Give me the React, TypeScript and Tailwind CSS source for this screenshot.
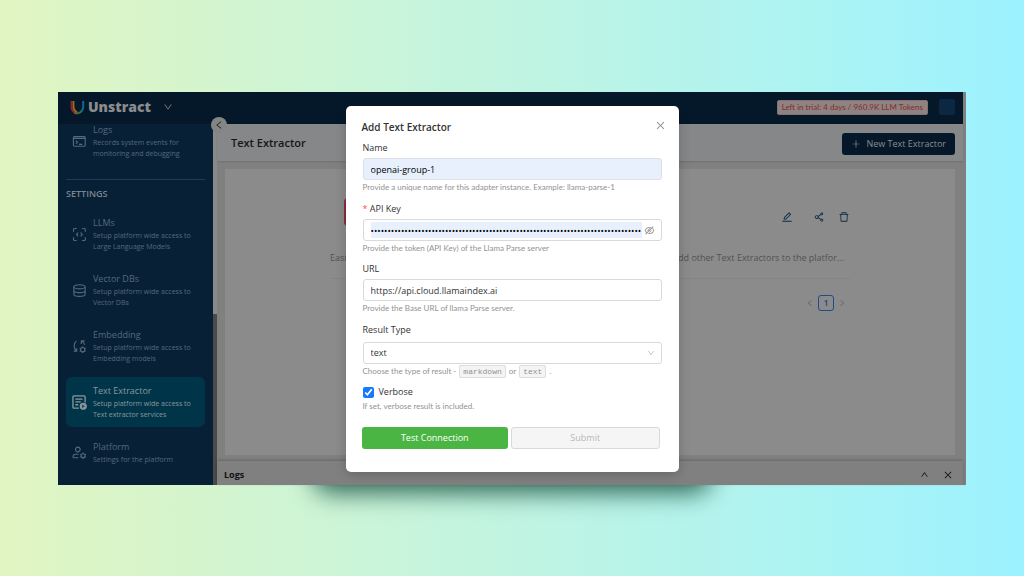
import React, { useState } from "react";
import {
  AiOutlineClose,
  AiOutlineDelete,
  AiOutlineDown,
  AiOutlineEdit,
  AiOutlineEyeInvisible,
  AiOutlineLeft,
  AiOutlinePlus,
  AiOutlineRight,
  AiOutlineShareAlt,
  AiOutlineUp,
} from "react-icons/ai";

interface menuItem {
  id: string;
  title: string;
  description: string;
  icon: React.ReactNode;
}

function Svg(props: { children: React.ReactNode }) {
  return (
    <svg
      viewBox="0 0 16 16"
      className="h-[15px] w-[15px] shrink-0"
      fill="none"
      stroke="currentColor"
      strokeWidth="1.2"
    >
      {props.children}
    </svg>
  );
}

const logsItem: menuItem = {
  id: "logs",
  title: "Logs",
  description: "Records system events for monitoring and debugging",
  icon: (
    <Svg>
      <rect x="1.5" y="2.8" width="12.6" height="10.2" rx="1" />
      <path d="M1.5 4.6h12.6M4 7l2 1.8-2 1.8M7.5 11h3.4" />
    </Svg>
  ),
};

const settingsItems: menuItem[] = [
  {
    id: "llms",
    title: "LLMs",
    description: "Setup platform wide access to Large Language Models",
    icon: (
      <Svg>
        <path d="M1.6 5V2.6a1 1 0 0 1 1-1H5M10.8 1.6h2.4a1 1 0 0 1 1 1V5M14.2 11v2.4a1 1 0 0 1-1 1h-2.4M5 14.4H2.6a1 1 0 0 1-1-1V11" />
        <path d="M6.6 6 4.8 8l1.8 2M9.2 6 11 8l-1.8 2" />
      </Svg>
    ),
  },
  {
    id: "vector",
    title: "Vector DBs",
    description: "Setup platform wide access to Vector DBs",
    icon: (
      <Svg>
        <ellipse cx="8" cy="4" rx="6" ry="2.2" />
        <path d="M2 4v8c0 1.2 2.7 2.2 6 2.2s6-1 6-2.2V4M2 8c0 1.2 2.7 2.2 6 2.2s6-1 6-2.2" />
      </Svg>
    ),
  },
  {
    id: "embedding",
    title: "Embedding",
    description: "Setup platform wide access to Embedding models",
    icon: (
      <Svg>
        <path d="M4.8 2C1.6 4.6 1.4 9.6 4.6 12.8M1.8 12.9H5V9.8M9.6 2h3.8M9.9 2v3.2M10 2.2c2 .8 3.2 2.2 3.6 4" />
        <circle cx="11.4" cy="11.4" r="2.3" />
        <path d="M11.4 7.8v1.3M11.4 13.7V15M8.2 9.6l1.2.7M13.4 12.5l1.2.7M8.2 13.2l1.2-.7M13.4 10.3l1.2-.7" />
      </Svg>
    ),
  },
  {
    id: "extractor",
    title: "Text Extractor",
    description: "Setup platform wide access to Text extractor services",
    icon: (
      <Svg>
        <path
          d="M7.4 14H2a1 1 0 0 1-1-1V2a1 1 0 0 1 1-1h11a1 1 0 0 1 1 1v6M3.6 4.4h7.6M3.6 7.4h5.8M3.6 10.4h3"
          strokeWidth="1.4"
        />
        <circle cx="12" cy="12" r="3.2" fill="currentColor" />
        <path d="M11.2 10.6 13.2 12l-2 1.4z" fill="#003549" stroke="#003549" strokeWidth=".5" />
      </Svg>
    ),
  },
  {
    id: "platform",
    title: "Platform",
    description: "Settings for the platform",
    icon: (
      <Svg>
        <circle cx="6.2" cy="4.8" r="2.5" />
        <path d="M1.2 13.6v-1c0-1.6 1-2.8 2.6-2.8h3.4M1.2 13.6h5.6" />
        <circle cx="11.8" cy="11.4" r="2.1" />
        <path d="M11.8 8v1.3M11.8 13.5v1.3M8.9 9.7l1.1.6M13.6 12.5l1.1.6M8.9 13.1l1.1-.6M13.6 10.3l1.1-.6" />
      </Svg>
    ),
  },
];

function MenuLink(props: { item: menuItem; active?: boolean }) {
  return (
    <a
      href={`#${props.item.id}`}
      className={
        props.active
          ? "flex items-center gap-[6px] rounded-md bg-[#003549] py-[7px] pr-2 pl-[6px] text-[#8a979d]"
          : "flex items-center gap-[6px] rounded-md py-[7px] pr-2 pl-[6px] text-[#56687a]"
      }
    >
      {props.item.icon}
      <span className="flex flex-col gap-px">
        <span className="text-[9px] leading-[13px]">{props.item.title}</span>
        <span className="text-[7px] leading-[11px]">{props.item.description}</span>
      </span>
    </a>
  );
}

function Logo() {
  return (
    <svg viewBox="0 0 15 15" className="h-[15px] w-[15px]" fill="none" strokeWidth="2">
      <path d="M1.5 1v5.4c0 2.4 1 4.6 3 5.8" stroke="#8e2431" />
      <path d="M3.5 1v5c0 2.6 1 5 3.6 6.2" stroke="#94711c" strokeWidth="1.8" />
      <path d="M4.2 12.3c1.2.8 2.4 1.1 3.6 1" stroke="#98551c" />
      <path d="M7.6 13.3c2-.2 3.8-1.4 4.7-3.4" stroke="#1d7a52" />
      <path d="M13.2 1v5.4c0 1.6-.3 2.8-1 3.9" stroke="#17629a" />
    </svg>
  );
}

function Header() {
  return (
    <header className="flex h-8 items-center bg-[#05182a] pr-2 pb-[2px] pl-3">
      <Logo />
      <span className="ml-[3px] text-[14px] leading-4 font-extrabold text-[#8c8c8c]">
        Unstract
      </span>
      <button type="button" aria-label="Switch organization" className="ml-3 text-[#8c8c8c]">
        <AiOutlineDown size={10} />
      </button>
      <span className="ml-auto rounded-xs border border-[#8c706e] bg-[#8c8382] px-1 font-['Lato',sans-serif] text-[8px] leading-[13px] whitespace-nowrap text-[#8c2a2c]">
        Left in trial: 4 days / 960.9K LLM Tokens
      </span>
      <button
        type="button"
        aria-label="Account"
        className="ml-[11px] h-4 w-4 rounded-xs bg-[#0c2742]"
      />
    </header>
  );
}

function Sidebar() {
  return (
    <aside className="relative flex w-[155px] shrink-0">
      <nav className="flex w-full flex-col bg-[#082036] px-2 pb-3">
        {/* the list is scrolled, so its first entry sits right under the header */}
        <div className="-mt-[8px]">
          <MenuLink item={logsItem} />
        </div>
        <hr className="mt-[13px] mb-2 border-[#233a50]" />
        <h2 className="mb-[9px] text-[9px] leading-3 font-semibold text-[#7b858e]">
          SETTINGS
        </h2>
        <div className="flex flex-col gap-[6px]">
          {settingsItems.map((item) => (
            <MenuLink key={item.id} item={item} active={item.id === "extractor"} />
          ))}
        </div>
      </nav>
      <button
        type="button"
        aria-label="Collapse menu"
        className="absolute -top-[7px] -right-[14px] z-10 flex h-4 w-4 items-center justify-center rounded-full bg-[#858585] text-[#222]"
      >
        <AiOutlineLeft size={10} />
      </button>
    </aside>
  );
}

function Adapters() {
  return (
    <div className="mx-2 mt-2 mb-[6px] flex-1 bg-[#8b8b8b] px-[105px] pt-[29px]">
      <div className="border-b border-[#848484] pb-[13px]">
        <div className="flex h-[28px] items-center pl-[14px] text-[#0d2a43]">
          <div className="h-[28px] w-[28px] rounded-sm bg-[#8c2c44]" />
          <button type="button" aria-label="Edit" className="mt-[10px] mr-5 ml-auto">
            <AiOutlineEdit size={12} />
          </button>
          <button type="button" aria-label="Share" className="mt-[10px] mr-[13px]">
            <AiOutlineShareAlt size={12} />
          </button>
          <button type="button" aria-label="Delete" className="mt-[10px]">
            <AiOutlineDelete size={12} />
          </button>
        </div>
        <p className="mt-[25px] flex justify-between pr-[6px] text-[9px] leading-[14px] text-[#525252]">
          <span>Easily</span>
          <span>add other Text Extractors to the platfor...</span>
        </p>
      </div>
      <div className="mt-4 flex items-center justify-end gap-1 pr-1 text-[#606060]">
        <button type="button" aria-label="Previous page">
          <AiOutlineLeft size={8} />
        </button>
        <button
          type="button"
          className="h-4 w-4 rounded-[3px] border border-[#1f4c8c] text-[9px] leading-[14px] font-semibold text-[#1b478c]"
        >
          1
        </button>
        <button type="button" aria-label="Next page">
          <AiOutlineRight size={8} />
        </button>
      </div>
    </div>
  );
}

function Help(props: { children: React.ReactNode }) {
  return (
    <p className="mt-[2px] font-['Lato',sans-serif] text-[8px] leading-[11px] text-[#929292]">
      {props.children}
    </p>
  );
}

function Code(props: { children: React.ReactNode }) {
  return (
    <code className="mx-px rounded-xs border border-[#ddd] bg-[#f4f4f4] px-[3px] py-px font-['Liberation_Mono',monospace] text-[8px]">
      {props.children}
    </code>
  );
}

function AddExtractor() {
  const [name, setName] = useState("openai-group-1");
  const [apiKey, setApiKey] = useState("x".repeat(80));
  const [url, setUrl] = useState("https://api.cloud.llamaindex.ai");
  const [resultType, setResultType] = useState("text");
  const [verbose, setVerbose] = useState(true);

  return (
    <div
      role="dialog"
      aria-labelledby="dialog-title"
      className="w-[333px] rounded-[5px] bg-white px-4 pt-[14px] pb-[23px] text-[#333] shadow-[0_3px_12px_rgba(0,0,0,0.2)]"
    >
      <div className="flex items-start justify-between">
        <h2 id="dialog-title" className="text-[10px] leading-[14px] font-semibold">
          Add Text Extractor
        </h2>
        <button type="button" aria-label="Close" className="-mr-[3px] text-[#888]">
          <AiOutlineClose size={11} />
        </button>
      </div>

      <form onSubmit={(e) => e.preventDefault()}>
        <div className="mt-[7px] px-px">
          <label htmlFor="name" className="block text-[9px] leading-[14px]">
            Name
          </label>
          <input
            id="name"
            type="text"
            value={name}
            onChange={(e) => setName(e.target.value)}
            className="mt-[3px] block h-[22px] w-full rounded-[3px] border border-[#dcdfe6] bg-[#e8f0fe] px-[7px] text-[9px] font-medium text-black"
          />
          <Help>
            Provide a unique name for this adapter instance. Example: llama-parse-1
          </Help>
        </div>

        <div className="mt-[9px] px-px">
          <label htmlFor="key" className="block text-[9px] leading-[14px]">
            <span className="text-[#ff4d4f]">*</span> API Key
          </label>
          <div className="mt-[3px] flex h-[22px] items-center rounded-[3px] border border-[#d9d9d9] pr-[6px] pl-[7px]">
            <input
              id="key"
              type="password"
              value={apiKey}
              onChange={(e) => setApiKey(e.target.value)}
              className="h-4 min-w-0 flex-1 bg-[#e8f0fe] text-[9px] text-black"
            />
            <button type="button" aria-label="Show key" className="ml-[2px] text-[#888]">
              <AiOutlineEyeInvisible size={11} />
            </button>
          </div>
          <Help>Provide the token (API Key) of the Llama Parse server</Help>
        </div>

        <div className="mt-2 px-px">
          <label htmlFor="url" className="block text-[9px] leading-[14px]">
            URL
          </label>
          <input
            id="url"
            type="text"
            value={url}
            onChange={(e) => setUrl(e.target.value)}
            className="mt-[3px] block h-[22px] w-full rounded-[3px] border border-[#d9d9d9] px-[7px] text-[9px]"
          />
          <Help>Provide the Base URL of llama Parse server.</Help>
        </div>

        <div className="mt-[9px] px-px">
          <label htmlFor="type" className="block text-[9px] leading-[14px]">
            Result Type
          </label>
          <div className="relative mt-[5px]">
            <select
              id="type"
              value={resultType}
              onChange={(e) => setResultType(e.target.value)}
              className="block h-[22px] w-full appearance-none rounded-[3px] border border-[#d9d9d9] px-[7px] text-[9px]"
            >
              <option value="text">text</option>
              <option value="markdown">markdown</option>
            </select>
            <AiOutlineDown
              size={8}
              className="pointer-events-none absolute top-[7px] right-[7px] text-[#bbb]"
            />
          </div>
          <Help>
            Choose the type of result - <Code>markdown</Code> or <Code>text</Code> .
          </Help>
        </div>

        <div className="mt-2 px-px">
          <label className="flex items-center gap-[5px] text-[9px] leading-[14px]">
            <input
              type="checkbox"
              checked={verbose}
              onChange={(e) => setVerbose(e.target.checked)}
              className="h-[11px] w-[11px] accent-[#1677ff]"
            />
            Verbose
          </label>
          <Help>If set, verbose result is included.</Help>
        </div>

        <div className="mt-[15px] flex gap-[3px] pr-[3px]">
          <button
            type="submit"
            className="h-[22px] flex-1 rounded-[3px] bg-[#4bb543] text-[9px] font-medium text-white"
          >
            Test Connection
          </button>
          <button
            type="button"
            disabled
            className="h-[22px] flex-1 rounded-[3px] border border-[#d9d9d9] bg-[#f5f5f5] text-[9px] text-[#b8b8b8]"
          >
            Submit
          </button>
        </div>
      </form>
    </div>
  );
}

export default function App() {
  return (
    <div className="flex min-h-screen flex-col bg-linear-to-r from-[#e1f5c1] to-[#9cf2ff] px-[58px] pt-[92px] pb-[91px] font-['Open_Sans',sans-serif]">
      <div className="relative flex flex-1 flex-col">
        {/* soft shadow that falls below the window */}
        <div className="absolute -bottom-[8px] left-1/2 h-10 w-[400px] -translate-x-1/2 rounded-[20px] bg-[#2f6656] blur-[12px]" />

        <div className="relative flex flex-1 flex-col bg-[#808080] pr-[3px]">
          <Header />
          <div className="flex flex-1">
            <Sidebar />
            {/* scroll track of the menu */}
            <div className="flex w-1 flex-col justify-end bg-[#8a8a8a]">
              <div className="h-[171px] bg-[#4a4a4a]" />
            </div>
            <main className="flex min-w-0 flex-1 flex-col bg-[#808080]">
              <div className="flex h-[37px] items-center justify-between bg-[#858789] pt-[2px] pr-2 pl-[14px] shadow-[0_1px_2px_rgba(0,0,0,0.12)]">
                <h1 className="text-[11px] font-semibold text-[#161616]">Text Extractor</h1>
                <button
                  type="button"
                  className="flex h-[22px] items-center gap-[5px] rounded-[3px] bg-[#05182a] px-[9px] text-[9px] text-[#8c8c8c]"
                >
                  <AiOutlinePlus size={10} />
                  New Text Extractor
                </button>
              </div>
              <Adapters />
              <footer className="flex h-6 items-center bg-[#808080] pt-[3px] pr-[10px] pl-[7px] text-[#111] shadow-[0_-1px_3px_rgba(0,0,0,0.2)]">
                <h2 className="text-[9px] font-bold">Logs</h2>
                <button type="button" aria-label="Expand logs" className="ml-auto">
                  <AiOutlineUp size={9} />
                </button>
                <button type="button" aria-label="Close logs" className="ml-[14px]">
                  <AiOutlineClose size={10} />
                </button>
              </footer>
            </main>
          </div>
        </div>

        <div className="absolute inset-0 z-20 flex items-start justify-center pt-[14px]">
          <AddExtractor />
        </div>
      </div>
    </div>
  );
}
